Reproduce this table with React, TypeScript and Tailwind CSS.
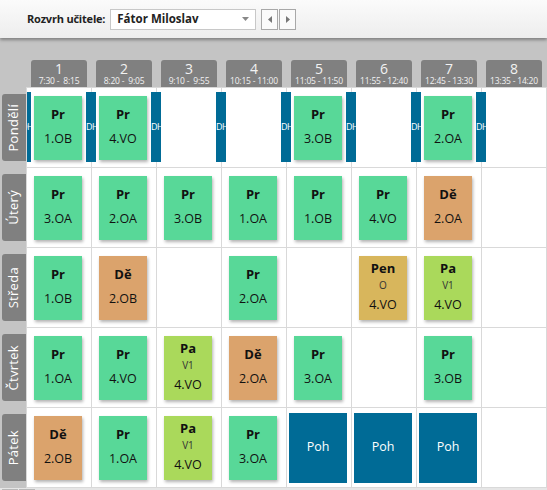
import React from 'react';

type Lesson = { s: string; c: string; g?: string; color: string } | { poh: true } | null;

const G = 'bg-[#58d898]';
const O = 'bg-[#dba36c]';
const Y = 'bg-[#d8b65c]';
const L = 'bg-[#aad95b]';

const pr = (c: string): Lesson => ({ s: 'Pr', c, color: G });
const de = (c: string): Lesson => ({ s: 'Dě', c, color: O });
const pa: Lesson = { s: 'Pa', g: 'V1', c: '4.VO', color: L };
const poh: Lesson = { poh: true };

const hours = [
  ['1', '7:30 -  8:15'],
  ['2', '8:20 -  9:05'],
  ['3', '9:10 -  9:55'],
  ['4', '10:15 - 11:00'],
  ['5', '11:05 - 11:50'],
  ['6', '11:55 - 12:40'],
  ['7', '12:45 - 13:30'],
  ['8', '13:35 - 14:20'],
];

const days: { name: string; lessons: Lesson[]; dh?: boolean }[] = [
  { name: 'Pondělí', dh: true, lessons: [pr('1.OB'), pr('4.VO'), null, null, pr('3.OB'), null, pr('2.OA'), null] },
  { name: 'Úterý', lessons: [pr('3.OA'), pr('2.OA'), pr('3.OB'), pr('1.OA'), pr('1.OB'), pr('4.VO'), de('2.OA'), null] },
  {
    name: 'Středa',
    lessons: [pr('1.OB'), de('2.OB'), null, pr('2.OA'), null, { s: 'Pen', g: 'O', c: '4.VO', color: Y }, pa, null],
  },
  { name: 'Čtvrtek', lessons: [pr('1.OA'), pr('4.VO'), pa, de('2.OA'), pr('3.OA'), null, pr('3.OB'), null] },
  { name: 'Pátek', lessons: [de('2.OB'), pr('1.OA'), pa, pr('3.OA'), poh, poh, poh, null] },
];

function Card({ lesson }: { lesson: Lesson }) {
  if (!lesson) return null;
  if ('poh' in lesson) {
    return (
      <div className="w-[58px] h-[70px] bg-[#006b96] text-white text-[12.5px] flex items-center justify-center">
        Poh
      </div>
    );
  }
  return (
    <div
      className={`w-[48px] h-[64px] ${lesson.color} shadow-[1px_2px_3px_rgba(0,0,0,0.3)] flex flex-col items-center text-[#111]`}
    >
      {lesson.g ? (
        <>
          <div className="mt-[3px] h-[18px] leading-[18px] text-[13px] font-bold">{lesson.s}</div>
          <div className="mt-[1px] h-[14px] leading-[14px] text-[10px] text-[#333]">{lesson.g}</div>
          <div className="mt-[4px] h-[18px] leading-[18px] text-[12.5px]">{lesson.c}</div>
        </>
      ) : (
        <>
          <div className="mt-[9px] h-[18px] leading-[18px] text-[13px] font-bold">{lesson.s}</div>
          <div className="mt-[7px] h-[18px] leading-[18px] text-[12.5px]">{lesson.c}</div>
        </>
      )}
    </div>
  );
}

export default function App() {
  return (
    <div className="w-[547px] h-[490px] overflow-hidden bg-[#c4c4c4] font-['Open_Sans',sans-serif]">
      {/* Toolbar */}
      <div className="relative z-10 h-[38px] bg-gradient-to-b from-[#fbfbfb] to-[#ededed] shadow-[0_2px_3px_rgba(0,0,0,0.35)] flex items-center pl-[27px]">
        <span className="text-[11px] font-bold text-[#222] tracking-[-0.2px]">Rozvrh učitele:</span>
        <div className="ml-[5px] w-[146px] h-[21px] bg-white border border-[#c8c8c8] flex items-center pl-[6px] pr-[6px]">
          <span className="text-[11.5px] font-bold text-[#222] flex-1">Fátor Miloslav</span>
          <svg width="7" height="4" viewBox="0 0 7 4">
            <path d="M0 0h7L3.5 4z" fill="#888" />
          </svg>
        </div>
        <div className="ml-[5px] w-[17px] h-[21px] border border-[#a8a8a8] bg-[#fafafa] flex items-center justify-center">
          <svg width="4" height="7" viewBox="0 0 4 7">
            <path d="M4 0v7L0 3.5z" fill="#777" />
          </svg>
        </div>
        <div className="ml-px w-[17px] h-[21px] border border-[#a8a8a8] bg-[#fafafa] flex items-center justify-center">
          <svg width="4" height="7" viewBox="0 0 4 7">
            <path d="M0 0v7L4 3.5z" fill="#777" />
          </svg>
        </div>
      </div>

      {/* Hour headers */}
      <div className="mt-[22px] flex pl-[26px]">
        {hours.map(([n, t]) => (
          <div key={n} className="w-[65px] pl-[5px]">
            <div className="w-[56px] h-[27px] rounded-t-[3px] bg-[#808080] flex flex-col items-center text-[#f2f2f2]">
              <div className="text-[14px] leading-[15px] mt-[1px]">{n}</div>
              <div className="text-[8.5px] leading-[10px] whitespace-pre tracking-[-0.2px]">{t}</div>
            </div>
          </div>
        ))}
      </div>

      {/* Timetable */}
      <div className="flex">
        <div className="w-[26px] pt-px">
          {days.map((d) => (
            <div key={d.name} className="h-[80px] pl-[2px] pt-[6px]">
              <div className="w-[24px] h-[67px] rounded-l-[3px] bg-[#808080] flex items-center justify-center">
                <span className="[writing-mode:vertical-rl] rotate-180 text-white text-[13px] tracking-[0.3px]">
                  {d.name}
                </span>
              </div>
            </div>
          ))}
        </div>
        <div className="w-[521px] bg-white border-l border-t border-[#d9d9d9] overflow-hidden">
          {days.map((d) => (
            <div key={d.name} className="relative flex h-[80px] border-b border-[#d9d9d9]">
              {d.lessons.map((l, i) => (
                <div key={i} className="w-[65px] border-r border-[#d9d9d9] flex items-center justify-center pr-[2px]">
                  <Card lesson={l} />
                </div>
              ))}
              {d.dh &&
                hours.map((_, i) => (
                  <div
                    key={i}
                    className="absolute top-[4px] h-[70px] w-[10px] bg-[#006b96] overflow-hidden flex items-center"
                    style={{ left: i * 65 - 6 }}
                  >
                    <span className="text-[9px] text-white whitespace-nowrap tracking-[-0.5px]">DH</span>
                  </div>
                ))}
            </div>
          ))}
        </div>
      </div>
      <div className="h-[10px] bg-[#e6e6e6] flex gap-px pl-[2px] pt-[1px]">
        <div className="w-[16px] h-[8px] border border-[#b8b8b8]" />
        <div className="w-[16px] h-[8px] border border-[#b8b8b8]" />
      </div>
    </div>
  );
}
